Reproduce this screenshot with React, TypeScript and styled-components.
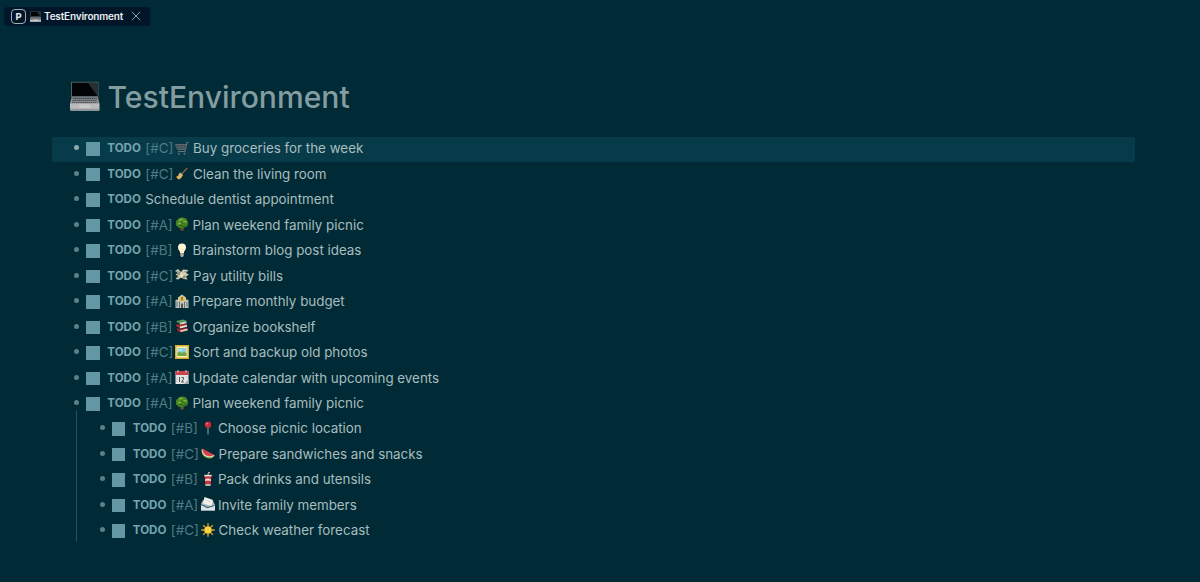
import React from "react";
import styled, { createGlobalStyle } from "styled-components";

const GlobalStyle = createGlobalStyle`
  body {
    margin: 0;
    background: #002b36;
    font-family: Inter, "Liberation Sans", sans-serif;
  }
`;

const Page = styled.div`
  box-sizing: border-box;
  height: 582px;
  overflow: hidden;
  background: #002b36;
  color: #a8bdbf;
`;

const TabBar = styled.header`
  display: flex;
  padding: 7px 0 0 4px;
`;

const Tab = styled.div`
  display: flex;
  align-items: center;
  box-sizing: border-box;
  width: 146px;
  height: 19px;
  padding: 0 0 1px 7px;
  border-radius: 4px 0 0 4px;
  background: #021629;
  color: #e9eef1;
`;

const PageBadge = styled.span`
  box-sizing: border-box;
  width: 15px;
  height: 15px;
  border: 1px solid #a3adb5;
  border-radius: 4px;
  font-size: 9.5px;
  font-weight: 700;
  line-height: 13px;
  text-align: center;
`;

const TabLabel = styled.span`
  width: 79px;
  margin-left: 3px;
  font-size: 10px;
  font-weight: 600;
  letter-spacing: -0.18px;
  line-height: 18px;
  white-space: nowrap;
`;

const TabIcon = styled.svg`
  width: 11px;
  height: 11px;
  margin-left: 4px;
`;

const CloseIcon = styled.svg`
  width: 10px;
  height: 10px;
  margin-left: 8px;
  stroke: #929ca6;
`;

const Title = styled.h1`
  display: flex;
  align-items: center;
  height: 40px;
  margin: 51px 0 0 70px;
  gap: 8px;
  color: #839da0;
  font-size: 30.1px;
  font-weight: 500;
  line-height: 40px;
`;

const TitleIcon = styled.svg`
  width: 29.5px;
  height: 30px;
  margin-top: -2px;
`;

const Outline = styled.main`
  width: 1083px;
  margin: 19.5px 0 0 52px;
`;

const Row = styled.div<{ $active?: boolean }>`
  display: flex;
  align-items: center;
  box-sizing: border-box;
  height: 25.5px;
  padding: 0 0 1.6px 22px;
  border-radius: 2px;
  background: ${(p) => (p.$active ? "#073b49" : "transparent")};
  white-space: nowrap;
`;

const Children = styled.div`
  box-sizing: border-box;
  position: relative;
  margin: -0.5px 0 0 25.5px;

  &::before {
    content: "";
    position: absolute;
    left: -2px;
    top: -7px;
    width: 1px;
    height: 132px;
    background: #195664;
  }
`;

const Bullet = styled.span<{ $active?: boolean }>`
  width: 5px;
  height: 5px;
  margin-top: -1px;
  border-radius: 50%;
  background: ${(p) => (p.$active ? "#8fa9ae" : "#5b8087")};
`;

const Checkbox = styled.span`
  width: 13.5px;
  height: 13.5px;
  margin: 1px 0 0 7.3px;
  background: #6497a4;
`;

const Marker = styled.span`
  width: 38px;
  margin-left: 7.5px;
  color: #76a4ae;
  font-size: 11.6px;
  font-weight: 700;
`;

const Priority = styled.span`
  width: 30px;
  color: #4f7b84;
  font-size: 13.36px;
`;

const Emoji = styled.svg`
  width: 14px;
  height: 14px;
  margin-top: -1px;
  overflow: visible;
`;

const Label = styled.span<{ $gap: number }>`
  margin-left: ${(p) => p.$gap}px;
  font-size: 13.36px;
`;

const Laptop = () => (
  <>
    <defs>
      <linearGradient id="keys" x1="0" y1="0" x2="0" y2="1">
        <stop offset="0" stopColor="#74777a" />
        <stop offset="1" stopColor="#a8a9ab" />
      </linearGradient>
    </defs>
    <path d="M2 0.5h26q1 0 1 1V16H1V1.500q0-1 1-1Z" fill="#53656a" />
    <path d="M2 1.500h26V15H2Z" fill="#020405" />
    <path d="M18 1.500h10V15Z" fill="#263035" />
    <path d="M1.500 16h27L30 23.500H0Z" fill="url(#keys)" />
    <path d="M3 17.500h24M2.500 19.500h25M2 21.500h26" stroke="#3c4144" strokeWidth="1" strokeDasharray="1.600 .5" />
    <path d="M0 23h30v6q0 1-1 1H1q-1 0-1-1Z" fill="#b9bbbc" />
    <path d="M10 23.500h10l1 4H9Z" fill="#c9caca" />
    <path d="M0 28.500h30" stroke="#8b9092" />
  </>
);

const Tree = () => (
  <>
    <path d="M6 8h2.300l.4 5.500H5.400Z" fill="#76502d" />
    <path d="M5 1q2-1.600 4 0 2.600-.2 3 2.300Q13.800 5 12.700 7q.3 3-2.700 3-1.500 2-3.400.8Q3.700 12 2.700 9.500.2 8.500 1.200 6 .2 3.500 2.600 3 3 1 5 1Z" fill="#478423" />
    <path d="M4 3.500q2-2 4-.5M8.500 5q2-1.500 3 .5M3 7q1.500-1.500 3 0" fill="none" stroke="#86b53a" strokeWidth="1.200" />
    <path d="m4 9 2-1 2 2 3-2M6 5l2 2" fill="none" stroke="#245e19" />
  </>
);

const drawings: Record<string, React.ReactNode> = {
  cart: (
    <g fill="none" stroke="#64747a">
      <path d="M13.500 1.500H12L10 10.500H3" strokeWidth="1.100" />
      <path d="M.5 3.500h10.800L10 8.500H2.500Z" fill="#34464c" strokeWidth=".8" />
      <path d="M1.500 6h9M3.500 3.500l1 5M6 3.500v5M8.500 3.500l-.5 5" strokeWidth=".6" />
      <circle cx="4" cy="12.700" r=".7" />
      <circle cx="9.500" cy="12.700" r=".7" />
    </g>
  ),
  broom: (
    <>
      <path d="m12.300 2-6 6.500" stroke="#8c6548" strokeWidth="1.200" />
      <path d="m4.500 7 3 2.500Q6.500 13 3.500 13.500L1 11Q3.500 10 4.500 7Z" fill="#d8a64b" />
      <path d="m5 6.500 3 2.500-.8 1.300L4.200 8Z" fill="#c9bfa4" />
      <path d="m2 11.500 3-2m-2 3.500 3-3" stroke="#f2cf77" strokeWidth=".7" />
    </>
  ),
  tree: <Tree />,
  bulb: (
    <>
      <path d="M7 .5q4 .2 4 4 0 2-1.700 3.700l-.6 2.300H5.300L4.700 8.200Q3 6.500 3 4.500 3 .7 7 .5Z" fill="#fff4d2" />
      <path d="M5.700 5.500 7 6.500l1.300-1" stroke="#efd79a" fill="none" strokeWidth=".6" />
      <path d="M5.300 10.500h3.400v2.300l-.9 1.200H6.200l-.9-1.200Z" fill="#a9afac" />
    </>
  ),
  money: (
    <>
      <path d="m0 3 3-2 3 3 2-2.500 5.500.5-2.500 3 3 1.500-3 2 1.500 3-4-.5-2-2-3 2.500-3-.5L3 8 .5 6.500 3 5Z" fill="#cdc9b9" />
      <path d="m4 3.500 7 5-2 3-7-5Z" fill="#8f9674" />
      <path d="m6 4.500 3 2.200-2 3.500-3-2.200Z" fill="#efdfb6" />
      <path d="m1 3 3 1M9 4l3-1M2 10l2-1" stroke="#868b82" strokeWidth=".7" />
    </>
  ),
  bank: (
    <>
      <path d="M.5 6 3 5.500V3.500L7 .5l4 3v2l2.500.5v8H.5Z" fill="#cbc9b7" />
      <path d="M2 7.500V13M4.500 7.500V14M9.500 7.500V14M12 7.500V13" stroke="#66757a" strokeWidth="1.100" />
      <circle cx="7" cy="4.700" r="2.500" fill="#e6bd38" />
      <path d="M8 3.500H6.500v1.200h1v1.200H6" fill="none" stroke="#76602a" strokeWidth=".8" />
      <path d="M6 9.500h2V14H6Z" fill="#465b62" />
    </>
  ),
  books: (
    <>
      <path d="m1.500 2 6.500-1.500L12 2 5 4 2 3.500Z" fill="#559957" />
      <path d="m4.500 4 7-1.800v2L5 5.800Z" fill="#d8dccb" />
      <path d="m1.500 5 3 1 6.500-1.500 1.500 1.500L5 9 1.500 7.500Z" fill="#b82d32" />
      <path d="m5 7.500 7-1.500v1.700L5 9.400Z" fill="#ece2d1" />
      <path d="m2 9 3 1 7-1.500 1 2.500L5.500 13.500 2.500 12Z" fill="#a42532" />
      <path d="m5.500 11.300 7-1.500v1.600l-7 1.500Z" fill="#ded6c6" />
    </>
  ),
  picture: (
    <>
      <path d="M0 0h14v14H0Z" fill="#d8aa2e" />
      <path d="M1.500 1.500h11v11h-11Z" fill="#fff0ad" />
      <path d="M2.500 3h9v8h-9Z" fill="#8bd0d5" />
      <path d="M2.500 8q2-2 4 0 2-1.500 5 0v3h-9Z" fill="#6ea443" />
      <path d="M3 5h4" stroke="#e7f5e4" />
    </>
  ),
  calendar: (
    <>
      <path d="M.5 1h13v13H.5Z" fill="#e3e4e3" />
      <path d="M.5 1h13v4H.5Z" fill="#c9424b" />
      <path d="M3 0v2.500M11 0v2.500" stroke="#d4d5d2" />
      <path d="M4.500 7v5M6.500 7.500h2v1.500L6.500 12H9" fill="none" stroke="#4e565a" />
      <path d="m9 14 4.500-4.500V14Z" fill="#a7adae" />
      <path d="M2 7v5M11 7h1.500" stroke="#aab5b8" strokeWidth=".6" />
    </>
  ),
  pin: (
    <>
      <path d="M7 6v7.500" stroke="#98a3aa" />
      <circle cx="7" cy="3.800" r="3.200" fill="#c92b38" />
      <circle cx="6" cy="2.700" r=".9" fill="#f18488" />
    </>
  ),
  melon: (
    <>
      <path d="M.3 3Q-.2 10 6 12.200q5.500 1.500 8-2.700Z" fill="#5b9847" />
      <path d="M.8 3Q.8 9.500 6 11q4.500 1.300 7.300-1.500Z" fill="#eee2b8" />
      <path d="M1.300 2.500Q1.500 8.500 6.500 10q3.500 1 6.500-1Z" fill="#e44352" />
      <path d="m4 5.500.4 1M6 7.500l.5.700M8.500 8l.6.500" stroke="#641f32" strokeWidth=".8" />
    </>
  ),
  drink: (
    <>
      <path d="M7 3 7.500.5H9" fill="none" stroke="#e8b6ac" />
      <path d="M3.700 3.500h6.600L9.700 13H4.300Z" fill="#d0343a" />
      <path d="M3.300 2.800h7.400v1.600H3.300Z" fill="#e5e3df" />
      <path d="M4 7.500q3-2 6 0l-.2 1.800q-2.800-1.800-5.600 0Z" fill="#f2ded6" />
      <path d="M4.300 12h5.400l-.2 2h-5Z" fill="#b9b5b4" />
    </>
  ),
  envelope: (
    <>
      <path d="m0 7 2-4 10 1 2 4v5.500H0Z" fill="#a9bac3" />
      <path d="m3.500 0 8.500 3-1.500 6L2 6.500Z" fill="#f2f1ec" />
      <path d="m4.500 3 5 1.700" stroke="#b8bfc2" strokeWidth=".6" />
      <path d="m0 7 7 3.500L14 8v5.500H0Z" fill="#dde4e7" />
      <path d="m0 7.500 6.500 3L13.500 8.500" fill="none" stroke="#3f6878" strokeWidth="1.300" />
    </>
  ),
  sun: (
    <>
      <path d="M7 .3V3M7 11v2.700M.3 7H3M11 7h2.700M2.200 2.200 4 4M10 10l1.800 1.800M11.800 2.200 10 4M4 10l-1.800 1.800" stroke="#e5a52d" strokeWidth="1.300" />
      <circle cx="7" cy="7" r="3.800" fill="#ffd33c" />
    </>
  ),
};

interface Task {
  text: string;
  priority?: string;
  icon?: string;
}

const tasks: Task[] = [
  { priority: "C", icon: "cart", text: "Buy groceries for the week" },
  { priority: "C", icon: "broom", text: "Clean the living room" },
  { text: "Schedule dentist appointment" },
  { priority: "A", icon: "tree", text: "Plan weekend family picnic" },
  { priority: "B", icon: "bulb", text: "Brainstorm blog post ideas" },
  { priority: "C", icon: "money", text: "Pay utility bills" },
  { priority: "A", icon: "bank", text: "Prepare monthly budget" },
  { priority: "B", icon: "books", text: "Organize bookshelf" },
  { priority: "C", icon: "picture", text: "Sort and backup old photos" },
  { priority: "A", icon: "calendar", text: "Update calendar with upcoming events" },
  { priority: "A", icon: "tree", text: "Plan weekend family picnic" },
];

const subtasks: Task[] = [
  { priority: "B", icon: "pin", text: "Choose picnic location" },
  { priority: "C", icon: "melon", text: "Prepare sandwiches and snacks" },
  { priority: "B", icon: "drink", text: "Pack drinks and utensils" },
  { priority: "A", icon: "envelope", text: "Invite family members" },
  { priority: "C", icon: "sun", text: "Check weather forecast" },
];

const TaskRow = ({ task, active }: { task: Task; active?: boolean }) => (
  <Row $active={active}>
    <Bullet $active={active} />
    <Checkbox />
    <Marker>TODO</Marker>
    {task.priority && <Priority>[#{task.priority}]</Priority>}
    {task.icon && <Emoji viewBox="0 0 14 14">{drawings[task.icon]}</Emoji>}
    <Label $gap={task.icon ? (task.priority === "C" ? 3.8 : 3.1) : 0}>{task.text}</Label>
  </Row>
);

export default function App() {
  return (
    <Page>
      <GlobalStyle />
      <TabBar>
        <Tab>
          <PageBadge>P</PageBadge>
          <TabIcon viewBox="0 0 30 30">
            <Laptop />
          </TabIcon>
          <TabLabel>TestEnvironment</TabLabel>
          <CloseIcon viewBox="0 0 10 10">
            <path d="m.8.8 8.400 8.400M9.200.8.8 9.200" />
          </CloseIcon>
        </Tab>
      </TabBar>
      <Title>
        <TitleIcon viewBox="0 0 30 30">
          <Laptop />
        </TitleIcon>
        TestEnvironment
      </Title>
      <Outline>
        {tasks.map((task, i) => (
          <TaskRow key={i} task={task} active={i === 0} />
        ))}
        <Children>
          {subtasks.map((task) => (
            <TaskRow key={task.text} task={task} />
          ))}
        </Children>
      </Outline>
    </Page>
  );
}
